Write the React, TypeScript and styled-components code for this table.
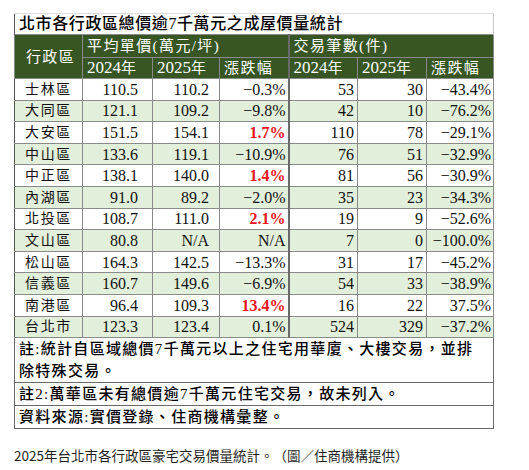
import React from 'react'
import styled, { createGlobalStyle } from 'styled-components'

const GlobalStyle = createGlobalStyle`
  html, body {
    margin: 0;
    padding: 0;
    background: #ffffff;
  }
`

const SERIF = `"Liberation Serif", "Noto Sans CJK TC", serif`
const GREEN_DARK = '#375623'
const GREEN_LIGHT = '#e2efda'
const GRID = '#8a8a8a'

const Page = styled.div`
  padding: 13px 0 0 14px;
  width: 515px;
`

const Table = styled.table`
  width: 479px;
  border-collapse: collapse;
  table-layout: fixed;
  font-family: ${SERIF};
  color: #111;
`

const TitleCell = styled.td`
  height: 20px;
  padding: 0 0 0 4px;
  border-top: 1px solid #dcdcdc;
  border-left: 1px solid #555;
  border-right: 1px solid #c8c8c8;
  font-size: 16px;
  font-weight: 500;
  letter-spacing: 0.6px;
  line-height: 20px;
  white-space: nowrap;
  color: #000;
`

const HeadCell = styled.th<{ $center?: boolean; $divider?: boolean; $tall?: boolean }>`
  height: ${({ $tall }) => ($tall ? '22px' : '20px')};
  padding: 0 0 0 4px;
  background: ${GREEN_DARK};
  color: #ffffff;
  border: 1px solid ${GRID};
  border-left: ${({ $divider }) => ($divider ? '2px solid #6a6a6a' : `1px solid ${GRID}`)};
  font-size: 15px;
  font-weight: 400;
  letter-spacing: 1.4px;
  text-align: ${({ $center }) => ($center ? 'center' : 'left')};
  white-space: nowrap;
  line-height: 20px;
`

const YearText = styled.span`
  font-size: 17px;
  letter-spacing: 0;
`

const DataRow = styled.tr<{ $shade: boolean }>`
  height: 21.6px;
  background: ${({ $shade }) => ($shade ? GREEN_LIGHT : '#ffffff')};
`

const NameCell = styled.td`
  padding: 0;
  border: 1px solid ${GRID};
  border-left: 1px solid #555;
  font-size: 14px;
  letter-spacing: 1.6px;
  text-align: center;
  line-height: 19px;
`

const NumCell = styled.td<{ $pad: number; $hot?: boolean; $divider?: boolean }>`
  padding: 0 ${({ $pad }) => $pad}px 0 0;
  border: 1px solid ${GRID};
  border-left: ${({ $divider }) => ($divider ? '2px solid #6a6a6a' : `1px solid ${GRID}`)};
  font-size: 16px;
  text-align: right;
  line-height: 19px;
  white-space: nowrap;
  color: ${({ $hot }) => ($hot ? '#e8141b' : '#111')};
  font-weight: ${({ $hot }) => ($hot ? 700 : 400)};
`

const NoteCell = styled.td<{ $h: number }>`
  height: ${({ $h }) => $h}px;
  padding: 0 0 0 4px;
  border: 1px solid #6a6a6a;
  font-size: 15px;
  font-weight: 500;
  letter-spacing: 1.3px;
  line-height: 22px;
  white-space: nowrap;
  color: #000;
  background: #ffffff;
`

const Caption = styled.p`
  margin: 15px 0 0;
  font-family: "Noto Sans CJK TC", "Noto Sans", sans-serif;
  font-size: 13.5px;
  line-height: 22px;
  color: #1f1f1f;
  text-spacing-trim: space-all;
`

type Row = {
  name: string
  p24: string
  p25: string
  pChg: string
  hot?: boolean
  n24: string
  n25: string
  nChg: string
}

const ROWS: Row[] = [
  { name: '士林區', p24: '110.5', p25: '110.2', pChg: '−0.3%', n24: '53', n25: '30', nChg: '−43.4%' },
  { name: '大同區', p24: '121.1', p25: '109.2', pChg: '−9.8%', n24: '42', n25: '10', nChg: '−76.2%' },
  { name: '大安區', p24: '151.5', p25: '154.1', pChg: '1.7%', hot: true, n24: '110', n25: '78', nChg: '−29.1%' },
  { name: '中山區', p24: '133.6', p25: '119.1', pChg: '−10.9%', n24: '76', n25: '51', nChg: '−32.9%' },
  { name: '中正區', p24: '138.1', p25: '140.0', pChg: '1.4%', hot: true, n24: '81', n25: '56', nChg: '−30.9%' },
  { name: '內湖區', p24: '91.0', p25: '89.2', pChg: '−2.0%', n24: '35', n25: '23', nChg: '−34.3%' },
  { name: '北投區', p24: '108.7', p25: '111.0', pChg: '2.1%', hot: true, n24: '19', n25: '9', nChg: '−52.6%' },
  { name: '文山區', p24: '80.8', p25: 'N/A', pChg: 'N/A', n24: '7', n25: '0', nChg: '−100.0%' },
  { name: '松山區', p24: '164.3', p25: '142.5', pChg: '−13.3%', n24: '31', n25: '17', nChg: '−45.2%' },
  { name: '信義區', p24: '160.7', p25: '149.6', pChg: '−6.9%', n24: '54', n25: '33', nChg: '−38.9%' },
  { name: '南港區', p24: '96.4', p25: '109.3', pChg: '13.4%', hot: true, n24: '16', n25: '22', nChg: '37.5%' },
  { name: '台北市', p24: '123.3', p25: '123.4', pChg: '0.1%', n24: '524', n25: '329', nChg: '−37.2%' },
]

const COLS = [68, 70, 67, 69, 69, 69, 67]

export default function App() {
  return (
    <Page>
      <GlobalStyle />
      <Table>
        <colgroup>
          {COLS.map((w, i) => (
            <col key={i} style={{ width: w }} />
          ))}
        </colgroup>
        <thead>
          <tr>
            <TitleCell colSpan={7}>北市各行政區總價逾7千萬元之成屋價量統計</TitleCell>
          </tr>
          <tr>
            <HeadCell rowSpan={2} $center>
              行政區
            </HeadCell>
            <HeadCell colSpan={3} $tall>
              平均單價(萬元/坪)
            </HeadCell>
            <HeadCell colSpan={3} $tall $divider>
              交易筆數(件)
            </HeadCell>
          </tr>
          <tr>
            <HeadCell>
              <YearText>2024</YearText>年
            </HeadCell>
            <HeadCell>
              <YearText>2025</YearText>年
            </HeadCell>
            <HeadCell>漲跌幅</HeadCell>
            <HeadCell $divider>
              <YearText>2024</YearText>年
            </HeadCell>
            <HeadCell>
              <YearText>2025</YearText>年
            </HeadCell>
            <HeadCell>漲跌幅</HeadCell>
          </tr>
        </thead>
        <tbody>
          {ROWS.map((r, i) => (
            <DataRow key={r.name} $shade={i % 2 === 1}>
              <NameCell>{r.name}</NameCell>
              <NumCell $pad={14}>{r.p24}</NumCell>
              <NumCell $pad={10}>{r.p25}</NumCell>
              <NumCell $pad={2} $hot={r.hot}>
                {r.pChg}
              </NumCell>
              <NumCell $pad={3} $divider>
                {r.n24}
              </NumCell>
              <NumCell $pad={3}>{r.n25}</NumCell>
              <NumCell $pad={2}>{r.nChg}</NumCell>
            </DataRow>
          ))}
        </tbody>
        <tfoot>
          <tr>
            <NoteCell colSpan={7} $h={44}>
              註:統計自區域總價7千萬元以上之住宅用華廈、大樓交易，並排
              <br />
              除特殊交易。
            </NoteCell>
          </tr>
          <tr>
            <NoteCell colSpan={7} $h={20}>
              註2:萬華區未有總價逾7千萬元住宅交易，故未列入。
            </NoteCell>
          </tr>
          <tr>
            <NoteCell colSpan={7} $h={20}>
              資料來源:實價登錄、住商機構彙整。
            </NoteCell>
          </tr>
        </tfoot>
      </Table>
      <Caption>2025年台北市各行政區豪宅交易價量統計。（圖／住商機構提供）</Caption>
    </Page>
  )
}
